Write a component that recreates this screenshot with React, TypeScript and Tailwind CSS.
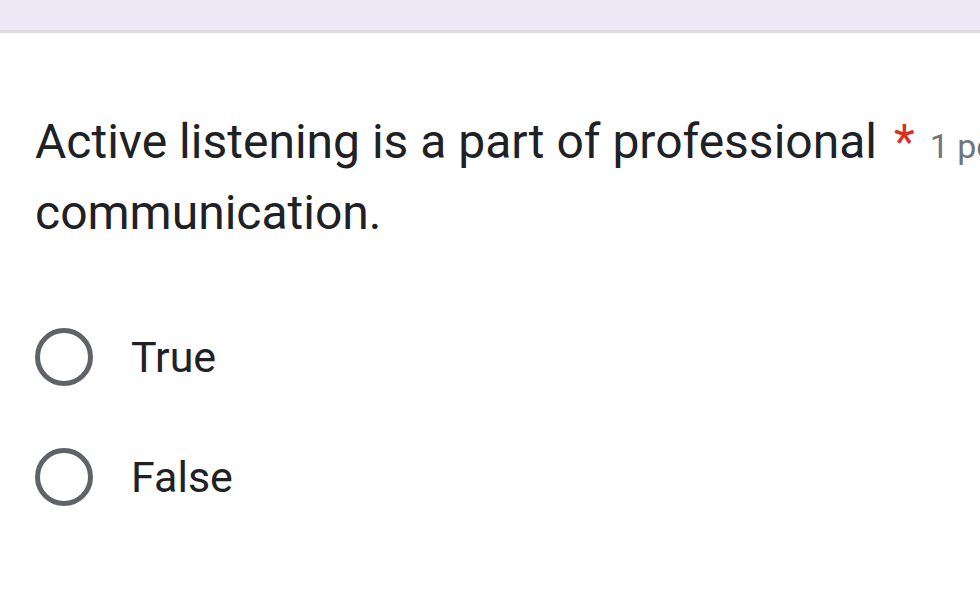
import React from "react";

function Radio() {
  return (
    <svg width="60" height="60" viewBox="0 0 60 60" className="block shrink-0">
      <circle cx="30" cy="30" r="26.5" fill="none" stroke="#5f6368" strokeWidth="5" />
    </svg>
  );
}

export default function App() {
  return (
    <div className="w-[980px] h-[605px] overflow-hidden bg-white" style={{ fontFamily: "Roboto, 'Noto Sans', sans-serif" }}>
      <div className="h-[30px] bg-[#ede9f7] border-b-[3px] border-[#dadce0] box-content" />
      <div className="pl-[35px] pt-[73px] whitespace-nowrap">
        <div className="text-[48px] leading-[71px] text-[#202124]">
          <div className="h-[71px] leading-[71px]">
            Active listening is a part of professional
            <span className="text-[#d93025] ml-[17px] leading-none">*</span>
            <span className="text-[34px] text-[#70757a] ml-[15px] leading-none">1 point</span>
          </div>
          <div className="h-[71px] leading-[71px]">communication.</div>
        </div>
        <div className="mt-[79px] flex flex-col gap-[60px]">
          <div className="flex items-center h-[60px] -ml-[1px]">
            <Radio />
            <span className="ml-[37px] text-[43px] leading-none text-[#202124]">True</span>
          </div>
          <div className="flex items-center h-[60px] -ml-[1px]">
            <Radio />
            <span className="ml-[37px] text-[43px] leading-none text-[#202124]">False</span>
          </div>
        </div>
      </div>
    </div>
  );
}
